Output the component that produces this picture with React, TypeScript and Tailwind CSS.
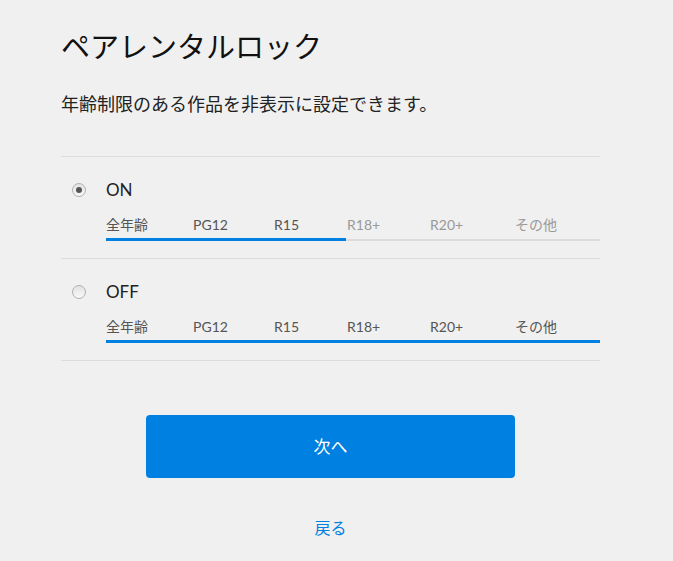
const ratings = [
  { label: "全年齢", w: "w-[87px]" },
  { label: "PG12", w: "w-[81px]" },
  { label: "R15", w: "w-[73px]" },
  { label: "R18+", w: "w-[83px]" },
  { label: "R20+", w: "w-[85px]" },
  { label: "その他", w: "w-[85px]" },
];

function Radio({ checked }: { checked: boolean }) {
  return (
    <div className="w-[14px] h-[14px] rounded-full border border-[#b0b0b0] bg-gradient-to-b from-[#e2e2e2] to-[#f8f8f8] flex items-center justify-center">
      {checked && <div className="w-[6px] h-[6px] rounded-full bg-[#555]" />}
    </div>
  );
}

function Option({ name, checked, upto }: { name: string; checked: boolean; upto: number }) {
  return (
    <div className="flex border-b border-[#dcdcdc] pt-[21px] pb-[17px]">
      <div className="w-[45px] pl-[11px] pt-[5px]">
        <Radio checked={checked} />
      </div>
      <div className="flex-1">
        <div className="text-[17px] leading-[24px] text-[#222]">{name}</div>
        <div className="flex mt-[13px] text-[14px] leading-[20px]">
          {ratings.map((r, i) => (
            <div key={r.label} className={`${r.w} ${i < upto ? "text-[#555]" : "text-[#999]"}`}>
              {r.label}
            </div>
          ))}
        </div>
        <div className="relative mt-[3px] h-[3px]">
          <div className="absolute left-0 right-0 top-[1px] h-[2px] bg-[#dcdcdc]" />
          <div
            className="absolute left-0 top-0 h-[3px] bg-[#0080e0]"
            style={{ width: upto >= ratings.length ? "100%" : "240px" }}
          />
        </div>
      </div>
    </div>
  );
}

export default function App() {
  return (
    <main
      className="min-h-[561px] bg-[#f0f0f0] px-[61px] pt-[27px]"
      style={{ fontFamily: "Lato, 'Noto Sans CJK JP', sans-serif" }}
    >
      <div className="w-[539px]">
        <h1 className="text-[29px] leading-[40px] text-[#111]">ペアレンタルロック</h1>
        <p className="mt-[24px] text-[18px] leading-[26px] text-[#222]">
          年齢制限のある作品を非表示に設定できます。
        </p>
        <div className="mt-[39px] border-t border-[#dcdcdc]">
          <Option name="ON" checked={true} upto={3} />
          <Option name="OFF" checked={false} upto={6} />
        </div>
        <div className="flex justify-center mt-[54px]">
          <button className="w-[369px] h-[63px] rounded-[4px] bg-[#0080e0] text-white text-[17px]">
            次へ
          </button>
        </div>
        <div className="flex justify-center mt-[38px]">
          <a href="#" className="text-[16px] text-[#0080e0]">
            戻る
          </a>
        </div>
      </div>
    </main>
  );
}
